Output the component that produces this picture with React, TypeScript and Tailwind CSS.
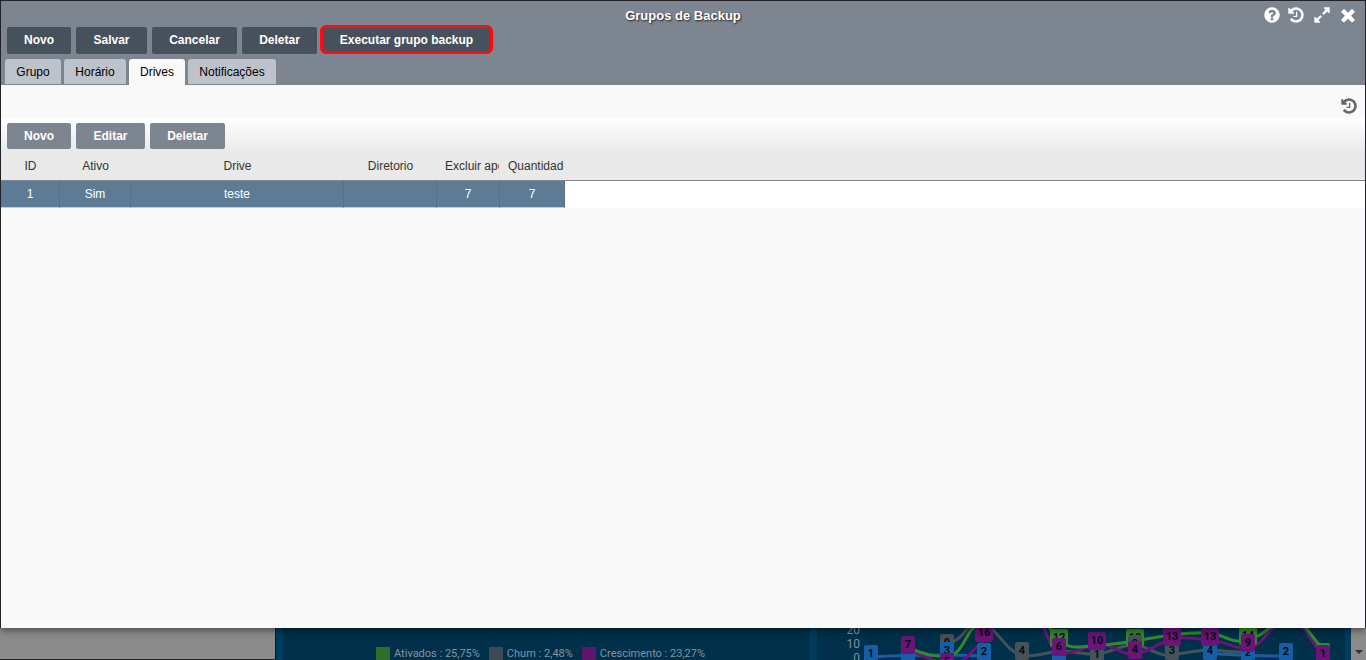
import React from "react";

const PATHS = {
  help: "M1024 1376v-192q0-14-9-23t-23-9h-192q-14 0-23 9t-9 23v192q0 14 9 23t23 9h192q14 0 23-9t9-23zm256-672q0-88-55.5-163t-138.5-116-170-41q-243 0-371 213-15 24 8 42l132 100q7 6 19 6 16 0 25-12 53-68 86-92 34-24 86-24 48 0 85.5 26t37.5 59q0 38-20 61t-68 45q-63 28-115.5 86.5t-52.5 125.5v36q0 14 9 23t23 9h192q14 0 23-9t9-23q0-19 21.5-49.5t54.5-49.5q32-18 49-28.5t46-35 44.5-48 28-60.5 12.5-81zm384 192q0 209-103 385.5t-279.5 279.5-385.5 103-385.5-103-279.5-279.5-103-385.5 103-385.5 279.5-279.5 385.5-103 385.5 103 279.5 279.5 103 385.5z",
  history: "M1664 896q0 156-61 298t-164 245-245 164-298 61q-172 0-327-72.5t-264-204.5q-7-10-6.5-22.5t8.5-20.5l137-138q10-9 25-9 16 2 23 12 73 95 179 147t225 52q104 0 198.5-40.5t163.5-109.5 109.5-163.5 40.5-198.5-40.5-198.5-109.5-163.5-163.5-109.5-198.5-40.5q-98 0-188 35.5t-160 101.5l137 138q31 30 14 69-17 40-59 40h-448q-26 0-45-19t-19-45v-448q0-42 40-59 39-17 69 14l130 129q107-101 244.5-156.5t284.5-55.5q156 0 298 61t245 164 164 245 61 298zm-640-288v448q0 14-9 23t-23 9h-320q-14 0-23-9t-9-23v-64q0-14 9-23t23-9h224v-352q0-14 9-23t23-9h64q14 0 23 9t9 23z",
  expand: "M883 1056q0 13-10 23l-332 332 144 144q19 19 19 45t-19 45-45 19h-448q-26 0-45-19t-19-45v-448q0-26 19-45t45-19 45 19l144 144 332-332q10-10 23-10t23 10l114 114q10 10 10 23zm781-864v448q0 26-19 45t-45 19-45-19l-144-144-332 332q-10 10-23 10t-23-10l-114-114q-10-10-10-23t10-23l332-332-144-144q-19-19-19-45t19-45 45-19h448q26 0 45 19t19 45z",
  close: "M1490 1322q0 40-28 68l-136 136q-28 28-68 28t-68-28l-294-294-294 294q-28 28-68 28t-68-28l-136-136q-28-28-28-68t28-68l294-294-294-294q-28-28-28-68t28-68l136-136q28-28 68-28t68 28l294 294 294-294q28-28 68-28t68 28l136 136q28 28 28 68t-28 68l-294 294 294 294q28 28 28 68z",
};

function IconButton({ icon, label, wide = false, large = false }: { icon: keyof typeof PATHS; label: string; wide?: boolean; large?: boolean }) {
  return (
    <button type="button" aria-label={label} className={`flex h-5 items-center justify-center ${wide ? "w-6" : "w-5"}`}>
      <svg viewBox="0 0 1792 1792" fill="currentColor" className={large ? "size-5 shrink-0" : "size-[18px] shrink-0"}>
        <path d={PATHS[icon]} />
      </svg>
    </button>
  );
}

const mainActions = [
  { label: "Novo", width: "w-16" },
  { label: "Salvar", width: "w-[71px]" },
  { label: "Cancelar", width: "w-[85px]" },
  { label: "Deletar", width: "w-[75px]" },
];

const driveActions = [
  { label: "Novo", width: "w-16" },
  { label: "Editar", width: "w-[69px]" },
  { label: "Deletar", width: "w-[75px]" },
];

const tabs = [
  { label: "Grupo", width: "w-14" },
  { label: "Horário", width: "w-[62px]" },
  { label: "Drives", width: "w-14" },
  { label: "Notificações", width: "w-[88px]" },
];

const columns = [
  { label: "ID", value: "1", width: "w-[59px]" },
  { label: "Ativo", value: "Sim", width: "w-[71px]" },
  { label: "Drive", value: "teste", width: "w-[213px]" },
  { label: "Diretorio", value: "", width: "w-[93px]" },
  { label: "Excluir após", value: "7", width: "w-[63px]" },
  { label: "Quantidade", value: "7", width: "w-[65px]" },
];

const legend = [
  { label: "Ativados : 25,75%", color: "bg-[#2f6d2c]" },
  { label: "Churn : 2,48%", color: "bg-[#3e4b54]" },
  { label: "Crescimento : 23,27%", color: "bg-[#5d1668]" },
];

const GREEN = "#338a29";
const GREY = "#46525a";
const BLUE = "#165fa6";
const PURPLE = "#6b1578";

const markers: [number, number, string, string][] = [
  [54, 25, "1", BLUE],
  [91, 26, "", BLUE],
  [91, 16, "7", PURPLE],
  [130, 14, "9", GREY],
  [130, 22, "3", BLUE],
  [130, 33, "5", PURPLE],
  [167, 4, "16", PURPLE],
  [167, 23, "2", BLUE],
  [205, 22, "4", GREY],
  [242, 9, "12", GREEN],
  [242, 28, "", BLUE],
  [242, 18, "6", PURPLE],
  [280, 26, "1", GREY],
  [280, 12, "10", PURPLE],
  [318, 9, "10", GREEN],
  [318, 15, "3", GREY],
  [318, 21, "4", PURPLE],
  [355, 22, "3", GREY],
  [355, 8, "13", PURPLE],
  [393, 22, "4", BLUE],
  [393, 8, "13", PURPLE],
  [431, 7, "14", GREEN],
  [431, 24, "2", BLUE],
  [431, 14, "9", PURPLE],
  [469, 23, "2", BLUE],
  [506, 23, "", GREEN],
  [506, 25, "1", PURPLE],
];

function GrowthChart() {
  return (
    <svg viewBox="0 0 528 32" className="h-8 w-[528px]" fontFamily="Roboto, sans-serif">
      <g stroke="#002a40" strokeWidth="1">
        {[54, 91, 130, 167, 205, 242, 280, 318, 355, 393, 431, 469, 506].map((x) => (
          <line key={x} x1={x} x2={x} y1="0" y2="32" />
        ))}
      </g>
      <g fontSize="12" fill="#7f929d" textAnchor="end">
        <text x="43" y="6">20</text>
        <text x="43" y="20">10</text>
        <text x="43" y="34">0</text>
      </g>
      <g fill="none" strokeWidth="3">
        <path stroke={GREY} d="M130 16C146 12 150 -2 158 -8M167 -6C182 4 190 24 205 27S230 24 242 23S266 27 280 26S304 16 318 17S340 29 355 27S378 22 393 22S418 26 431 23" />
        <path stroke={BLUE} d="M54 29C70 28 110 27 130 27S153 28 167 28M393 25C410 27 430 28 469 28" />
        <path stroke={PURPLE} d="M91 22C104 26 120 36 135 36S154 20 167 14M224 -6C230 6 234 22 242 25S268 19 280 16S303 28 318 26S340 15 355 11S380 12 393 12S418 22 431 20S450 4 460 -4M484 -4L504 26" />
        <path stroke={GREEN} d="M91 20C104 24 112 29 130 28S148 0 162 -3M230 -6C238 12 246 20 262 19S300 16 318 13S340 9 355 7S380 4 393 5S416 17 431 12S448 3 456 -3M486 -4L506 22" />
      </g>
      {markers.map(([x, y, label, color], i) => (
        <g key={i}>
          <rect x={x - (label.length > 1 ? 9 : 7)} y={y - 8} width={label.length > 1 ? 18 : 14} height="18" rx="2" fill={color} />
          {label && (
            <text x={x} y={y + 4} fontSize="11" fontWeight="700" fill="#080d12" textAnchor="middle">
              {label}
            </text>
          )}
        </g>
      ))}
    </svg>
  );
}

function Dashboard() {
  return (
    <div aria-hidden="true" className="flex h-8 w-full overflow-hidden bg-[#003c5b]">
      <div className="w-[275px] shrink-0 border-b border-[#222] bg-[#8b8b8b]" />
      <div className="flex min-w-0 flex-1 gap-[7px] border-l border-[#061a26] pr-1.5 pl-[7px]">
        <div className="flex min-w-0 flex-1 items-end justify-center gap-[9px] overflow-hidden bg-[#00304a] pr-3 font-[Roboto,sans-serif] text-[11px] leading-3 text-[#84949e]">
          {legend.map((item) => (
            <div key={item.label} className="flex h-[13px] items-center gap-1 whitespace-nowrap">
              <span className={`h-[13px] w-3.5 ${item.color}`} />
              {item.label}
            </div>
          ))}
        </div>
        <div className="w-[528px] shrink-0 overflow-hidden bg-[#00304a]">
          <GrowthChart />
        </div>
      </div>
      <div className="flex w-[15px] shrink-0 items-end justify-center bg-[#8b8b8b] pb-1.5">
        <svg viewBox="0 0 8 4" className="h-1 w-2">
          <path d="M0 0h8L4 4z" fill="#303030" />
        </svg>
      </div>
    </div>
  );
}

export default function App() {
  return (
    <div className="flex min-h-screen flex-col bg-[#8b8b8b] font-['Liberation_Sans',Arial,sans-serif] text-xs text-[#333]">
      <main className="relative flex flex-1 flex-col border-x border-t border-[#212126] bg-[#f9f9f9] shadow-[0_2px_8px_rgba(0,0,0,0.5)]">
        <header className="bg-[#7d8690]">
          <div className="grid h-6 grid-cols-[1fr_auto_1fr] items-center">
            <h1 className="col-start-2 pt-[5px] text-[13px] leading-5 font-bold text-white [text-shadow:1px_1px_2px_#222]">Grupos de Backup</h1>
            <div className="flex items-center justify-end gap-1 pt-[3px] pr-[7px] text-white">
              <IconButton icon="help" label="Ajuda" />
              <IconButton icon="history" label="Histórico" />
              <IconButton icon="expand" label="Expandir" wide />
              <IconButton icon="close" label="Fechar" large />
            </div>
          </div>
          <div className="flex items-end gap-[5px] px-1.5 font-bold text-white">
            {mainActions.map((action) => (
              <button key={action.label} type="button" className={`h-[27px] rounded-xs bg-[#47515b] pb-0.5 ${action.width}`}>
                {action.label}
              </button>
            ))}
            <button type="button" className="-ml-0.5 h-[29px] w-[173px] rounded-md border-3 border-[#ff0a0f] bg-[#47515b]">
              Executar grupo backup
            </button>
          </div>
          <nav role="tablist" className="flex items-end gap-[3px] px-1 pt-[5px] text-black">
            {tabs.map(({ label, width }) => (
              <button
                key={label}
                type="button"
                role="tab"
                aria-selected={label === "Drives"}
                className={`rounded-t-[3px] ${width} ${label === "Drives" ? "h-[26px] bg-[#f9f9f9]" : "mb-px h-[25px] bg-[#bec3cb]"}`}
              >
                {label}
              </button>
            ))}
          </nav>
        </header>

        <div className="flex h-[33px] items-center justify-end pt-2 pr-1.5 text-[#666]">
          <IconButton icon="history" label="Histórico do registro" />
        </div>

        <section>
          <div className="flex h-[34px] items-end gap-[5px] bg-linear-to-b from-white to-[#e9e9e9] px-1.5 pb-[3px] font-bold text-white">
            {driveActions.map((action) => (
              <button key={action.label} type="button" className={`h-[26px] rounded-xs bg-[#7d8690] ${action.width}`}>
                {action.label}
              </button>
            ))}
          </div>
          <table className="w-full table-fixed border-separate border-spacing-0 text-center">
            <thead className="bg-[#e9e9e9]">
              <tr className="h-[29px]">
                {columns.map((column) => (
                  <th key={column.label} className={`border-b border-[#7d8690] p-0 font-normal whitespace-nowrap ${column.width}`}>
                    <div className={column.label.length > 9 ? "mr-px overflow-hidden pl-2 text-left" : ""}>{column.label}</div>
                  </th>
                ))}
                <td className="border-b border-[#7d8690]" />
              </tr>
            </thead>
            <tbody className="bg-white">
              <tr className="h-[27px] text-white">
                {columns.map((column) => (
                  <td key={column.label} className="border-r border-b border-r-[#557189] border-b-[#ccc] bg-[#5e7b95] p-0 last-of-type:border-r-[#ccc]">
                    {column.value}
                  </td>
                ))}
                <td />
              </tr>
            </tbody>
          </table>
        </section>
      </main>
      <Dashboard />
    </div>
  );
}
